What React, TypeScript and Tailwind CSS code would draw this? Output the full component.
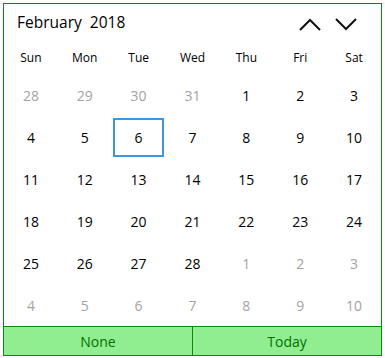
const days = ["Sun", "Mon", "Tue", "Wed", "Thu", "Fri", "Sat"];

type Cell = { n: number; cur: boolean };

function buildCells(): Cell[] {
  const cells: Cell[] = [];
  for (const n of [28, 29, 30, 31]) cells.push({ n, cur: false });
  for (let n = 1; n <= 28; n++) cells.push({ n, cur: true });
  for (let n = 1; n <= 10; n++) cells.push({ n, cur: false });
  return cells;
}

function Chevron({ up }: { up?: boolean }) {
  return (
    <svg width="22" height="13" viewBox="0 0 22 13" fill="none">
      <path
        d={up ? "M1 12 L11 2 L21 12" : "M1 1 L11 11 L21 1"}
        stroke="#111"
        strokeWidth="2"
      />
    </svg>
  );
}

export default function App() {
  const cells = buildCells();
  return (
    <div
      className="m-[3px] w-[379px] border border-[#0a8a0a] bg-white text-black"
      style={{ fontFamily: '"Open Sans", "Noto Sans", sans-serif' }}
    >
      <div className="flex h-[38px] items-center justify-between pl-[13px] pr-[24px]">
        <span className="text-[15.5px]">February&nbsp; 2018</span>
        <div className="flex items-center gap-[14px] pt-[2px]">
          <Chevron up />
          <Chevron />
        </div>
      </div>
      <div className="grid h-[32px] grid-cols-7 items-center">
        {days.map((d) => (
          <div key={d} className="text-center text-[12px]">
            {d}
          </div>
        ))}
      </div>
      <div className="grid grid-cols-7 grid-rows-6">
        {cells.map((c, i) => (
          <div key={i} className="flex h-[42px] items-center justify-center">
            <div
              className={`flex h-[39px] w-[51px] items-center justify-center text-[14px] ${
                c.cur && c.n === 6 ? "border-2 border-[#3d96e0]" : ""
              } ${c.cur ? "text-black" : "text-[#a3a3a3]"}`}
            >
              {c.n}
            </div>
          </div>
        ))}
      </div>
      <div className="flex h-[29px] border-t border-[#0a8a0a] bg-[#90ee90] text-[14px] font-medium text-[#037003]">
        <button className="flex-1 border-r border-[#0a8a0a]">None</button>
        <button className="flex-1">Today</button>
      </div>
    </div>
  );
}
